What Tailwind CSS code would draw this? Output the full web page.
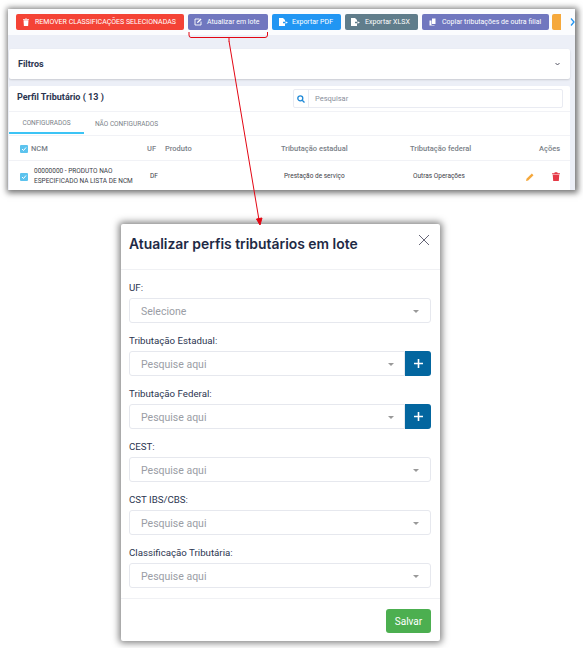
<!DOCTYPE html>
<html lang="pt-BR">
<head>
    <meta charset="UTF-8">
    <title>Atualizar perfis tributários em lote</title>
    <script src="https://cdn.jsdelivr.net/npm/@tailwindcss/browser@4"></script>
</head>
<body class="bg-white font-['Roboto',sans-serif]">
<div class="relative w-[583px] h-[648px] overflow-hidden pt-[9px]">

    <!-- Tela de fundo -->
    <div class="ml-[8px] w-[567px] h-[181px] bg-[#eceff7] overflow-hidden shadow-[1px_1px_6px_2px_rgba(0,0,0,0.55)]">
        <div class="h-[26px] bg-[#fbfcfe] flex items-start pt-[5px] pl-[8px] gap-[4px] text-[7px] text-white whitespace-nowrap overflow-hidden">
            <div class="w-[168px] h-[16px] shrink-0 rounded-[2px] bg-[#f44336] flex items-center pl-[7px] gap-[6px]">
                <svg class="w-[6px] h-[8px] shrink-0" viewBox="0 0 6 8" fill="#fff"><path d="M0 1h2l.3-.6h1.400L4 1h2v.8H0zM.5 2.200h5L5.100 8H.9z"/></svg>
                REMOVER CLASSIFICAÇÕES SELECIONADAS
            </div>
            <div class="w-[80px] h-[16px] shrink-0 rounded-[2px] bg-[#7077bf] flex items-center pl-[6px] gap-[5px]">
                <svg class="w-[8px] h-[8px] shrink-0" viewBox="0 0 8 8" fill="none" stroke="#fff" stroke-width="0.9"><path d="M5.500 1H1v6h6V3.500"/><path d="M3 5l.3-1.200L6.600.6l.9.9L4.200 4.800z" fill="#fff" stroke="none"/></svg>
                Atualizar em lote
            </div>
            <div class="w-[69px] h-[16px] shrink-0 rounded-[2px] bg-[#2196f3] flex items-center pl-[7px] gap-[4px]">
                <svg class="w-[9px] h-[8px] shrink-0" viewBox="0 0 9 8" fill="#fff"><path d="M0 0h4l2 2v1.800H4v1.400h2V8H0zM6.500 3.200L9 4.500 6.500 5.800z"/></svg>
                Exportar PDF
            </div>
            <div class="w-[73px] h-[16px] shrink-0 rounded-[2px] bg-[#607d8b] flex items-center pl-[6px] gap-[5px]">
                <svg class="w-[9px] h-[8px] shrink-0" viewBox="0 0 9 8" fill="#fff"><path d="M0 0h4l2 2v1.800H4v1.400h2V8H0zM6.500 3.200L9 4.500 6.500 5.800z"/></svg>
                Exportar XLSX
            </div>
            <div class="w-[127px] h-[16px] shrink-0 rounded-[2px] bg-[#7077bf] flex items-center pl-[7px] gap-[5px]">
                <svg class="w-[8px] h-[8px] shrink-0" viewBox="0 0 8 8" fill="#fff"><path d="M3 .5h3.500V6H3zM.5 2.500h2V7h3v.5H.5z"/></svg>
                Copiar tributações de outra filial
            </div>
            <div class="w-[9px] h-[16px] shrink-0 -ml-[1px] rounded-l-[2px] bg-[#f5a83c]"></div>
            <svg class="w-[5px] h-[8px] mt-[4px] ml-[5px] shrink-0" viewBox="0 0 5 8" fill="none" stroke="#2196f3" stroke-width="1.300"><path d="M1 .5l3 3.500-3 3.500"/></svg>
        </div>

        <div class="mt-[14px] mx-[1px] w-[561px] h-[30px] bg-white rounded-[2px] shadow-[0_1px_2px_rgba(0,0,0,0.15)] flex items-center justify-between pl-[9px] pr-[10px]">
            <span class="mt-[2px] text-[9px] font-bold text-[#2b3550]">Filtros</span>
            <svg class="w-[5px] h-[4px]" viewBox="0 0 5 4" fill="none" stroke="#445" stroke-width="0.900"><path d="M.5 1l2 2 2-2"/></svg>
        </div>

        <div class="mt-[7px] mx-[1px] w-[561px] h-[104px] bg-white rounded-t-[2px]">
            <div class="h-[26px] flex items-center justify-between border-b border-[#f1f2f6] pl-[8px] pr-[7px]">
                <span class="-mt-[2px] text-[9px] font-bold text-[#2b3550]">Perfil Tributário ( 13 )</span>
                <div class="w-[270px] h-[19px] flex items-center rounded-[2px] border border-[#e9ebf2]">
                    <div class="w-[15px] h-full flex items-center justify-center border-r border-[#e9ebf2]">
                        <svg class="w-[8px] h-[8px]" viewBox="0 0 8 8" fill="none" stroke="#1e88d6" stroke-width="1.300"><circle cx="3.300" cy="3.300" r="2.500"/><path d="M5.200 5.200L7.500 7.500"/></svg>
                    </div>
                    <span class="pl-[6px] pt-[1px] text-[7.5px] text-[#8a8f9c]">Pesquisar</span>
                </div>
            </div>
            <div class="h-[24px] flex border-b border-[#f1f2f6] text-[6.5px] text-[#7a7f88]">
                <div class="w-[75px] h-[22px] flex items-center justify-center pt-[3px] border-b-[2px] border-[#3cc4f5]">CONFIGURADOS</div>
                <div class="w-[85px] h-[22px] flex items-center justify-center pt-[3px]">NÃO CONFIGURADOS</div>
            </div>
            <div class="h-[25px] flex items-center border-b border-[#f1f2f6] pt-[1px] text-[7.5px] text-[#7a7f88] font-medium">
                <div class="w-[11px] ml-[11px]"><div class="w-[8px] h-[8px] rounded-[1px] bg-[#5cc3ee] flex items-center justify-center"><svg class="w-[6px] h-[6px]" viewBox="0 0 6 6" fill="none" stroke="#fff" stroke-width="1"><path d="M1 3l1.500 1.500L5 1.500"/></svg></div></div>
                <span class="w-[116px]">NCM</span>
                <span class="w-[18px]">UF</span>
                <span class="w-[116px]">Produto</span>
                <span class="w-[129px]">Tributação estadual</span>
                <span class="w-[129px]">Tributação federal</span>
                <span class="w-[21px]">Ações</span>
            </div>
            <div class="h-[29px] flex items-center pt-[2px] text-[6.5px] text-[#3c4048] leading-[9.500px]">
                <div class="w-[14px] ml-[11px]"><div class="w-[8px] h-[8px] rounded-[1px] bg-[#5cc3ee] flex items-center justify-center"><svg class="w-[6px] h-[6px]" viewBox="0 0 6 6" fill="none" stroke="#fff" stroke-width="1"><path d="M1 3l1.500 1.500L5 1.500"/></svg></div></div>
                <span class="w-[116px] whitespace-nowrap">00000000 - PRODUTO NAO<br>ESPECIFICADO NA LISTA DE NCM</span>
                <span class="w-[134px]">DF</span>
                <span class="w-[129px] whitespace-nowrap">Prestação de serviço</span>
                <span class="w-[113px] whitespace-nowrap">Outras Operações</span>
                <div class="flex items-center gap-[18px]">
                    <svg class="w-[8px] h-[8px]" viewBox="0 0 8 8" fill="#f5a83c"><path d="M0 8l.5-2.200L5.800.5 7.500 2.200 2.200 7.500z"/></svg>
                    <svg class="w-[8px] h-[9px]" viewBox="0 0 7 8" fill="#e53946"><path d="M0 1h2l.4-.8h2.200L5 1h2v1H0zM.6 2.400h5.800L6 8H1z"/></svg>
                </div>
            </div>
        </div>
    </div>

    <!-- Modal -->
    <div class="mt-[34px] ml-[121px] w-[319px] h-[417px] bg-white rounded-[2px] flex flex-col text-[9.7px] text-[#2b3550] shadow-[0_0_7px_2px_rgba(0,0,0,0.5)]">
        <div class="h-[46px] flex items-start justify-between border-b border-[#f0f1f4] pl-[8px] pr-[11px] shrink-0">
            <h2 class="mt-[11px] text-[13.9px] leading-[18px] font-semibold font-['Inter',sans-serif] text-[#1e2a45]">Atualizar perfis tributários em lote</h2>
            <svg class="w-[10px] h-[10px] mt-[11px]" viewBox="0 0 10 10" fill="none" stroke="#667" stroke-width="1"><path d="M0 0l10 10M10 0L0 10"/></svg>
        </div>
        <div class="flex-1 pl-[8px] pr-[9px] pt-[10px] flex flex-col gap-[10px]">
            <div>
                <p class="h-[14px] pt-[1px] leading-[14px]">UF:</p>
                <div class="mt-[4px] h-[25px] rounded-[3px] border border-[#e6e8ee] flex items-center justify-between pt-[2px] pl-[11px] pr-[11px] text-[10.5px] text-[#9a9da5]">Selecione<i class="w-0 h-0 border-x-[3px] border-t-[3px] border-x-transparent border-t-[#999]"></i></div>
            </div>
            <div>
                <p class="h-[14px] pt-[1px] leading-[14px]">Tributação Estadual:</p>
                <div class="mt-[4px] flex">
                    <div class="flex-1 h-[25px] rounded-l-[3px] border border-[#e6e8ee] flex items-center justify-between pt-[2px] pl-[11px] pr-[10px] text-[10.5px] text-[#9a9da5]">Pesquise aqui<i class="w-0 h-0 border-x-[3px] border-t-[3px] border-x-transparent border-t-[#999]"></i></div>
                    <div class="w-[26px] h-[25px] rounded-r-[3px] bg-[#03669f] flex items-center justify-center"><svg class="w-[9px] h-[9px]" viewBox="0 0 9 9" stroke="#fff" stroke-width="1.600"><path d="M4.500 0v9M0 4.500h9"/></svg></div>
                </div>
            </div>
            <div>
                <p class="h-[14px] pt-[1px] leading-[14px]">Tributação Federal:</p>
                <div class="mt-[4px] flex">
                    <div class="flex-1 h-[25px] rounded-l-[3px] border border-[#e6e8ee] flex items-center justify-between pt-[2px] pl-[11px] pr-[10px] text-[10.5px] text-[#9a9da5]">Pesquise aqui<i class="w-0 h-0 border-x-[3px] border-t-[3px] border-x-transparent border-t-[#999]"></i></div>
                    <div class="w-[26px] h-[25px] rounded-r-[3px] bg-[#03669f] flex items-center justify-center"><svg class="w-[9px] h-[9px]" viewBox="0 0 9 9" stroke="#fff" stroke-width="1.600"><path d="M4.500 0v9M0 4.500h9"/></svg></div>
                </div>
            </div>
            <div>
                <p class="h-[14px] pt-[1px] leading-[14px]">CEST:</p>
                <div class="mt-[4px] h-[25px] rounded-[3px] border border-[#e6e8ee] flex items-center justify-between pt-[2px] pl-[11px] pr-[11px] text-[10.5px] text-[#9a9da5]">Pesquise aqui<i class="w-0 h-0 border-x-[3px] border-t-[3px] border-x-transparent border-t-[#999]"></i></div>
            </div>
            <div>
                <p class="h-[14px] pt-[1px] leading-[14px]">CST IBS/CBS:</p>
                <div class="mt-[4px] h-[25px] rounded-[3px] border border-[#e6e8ee] flex items-center justify-between pt-[2px] pl-[11px] pr-[11px] text-[10.5px] text-[#9a9da5]">Pesquise aqui<i class="w-0 h-0 border-x-[3px] border-t-[3px] border-x-transparent border-t-[#999]"></i></div>
            </div>
            <div>
                <p class="h-[14px] pt-[1px] leading-[14px]">Classificação Tributária:</p>
                <div class="mt-[4px] h-[25px] rounded-[3px] border border-[#e6e8ee] flex items-center justify-between pt-[2px] pl-[11px] pr-[11px] text-[10.5px] text-[#9a9da5]">Pesquise aqui<i class="w-0 h-0 border-x-[3px] border-t-[3px] border-x-transparent border-t-[#999]"></i></div>
            </div>
        </div>
        <div class="h-[43px] border-t border-[#f0f1f4] flex items-start justify-end pr-[9px] pt-[10px] shrink-0">
            <div class="w-[45px] h-[24px] rounded-[3px] bg-[#4caf50] text-[10px] text-white flex items-center justify-center">Salvar</div>
        </div>
    </div>

    <!-- Anotação em vermelho por cima -->
    <svg class="absolute left-0 top-0 w-[583px] h-[648px] pointer-events-none" viewBox="0 0 583 648" fill="none" stroke="#e30613" stroke-width="1">
        <path d="M189 32v3q0 2.500 2 2.500h74q2.500 0 2.500-2.500v-3"/>
        <path d="M229 37.500v4M229 41l30 179"/>
        <path d="M256.500 219l5.500-1-2 7z" fill="#e30613"/>
    </svg>
</div>
</body>
</html>
